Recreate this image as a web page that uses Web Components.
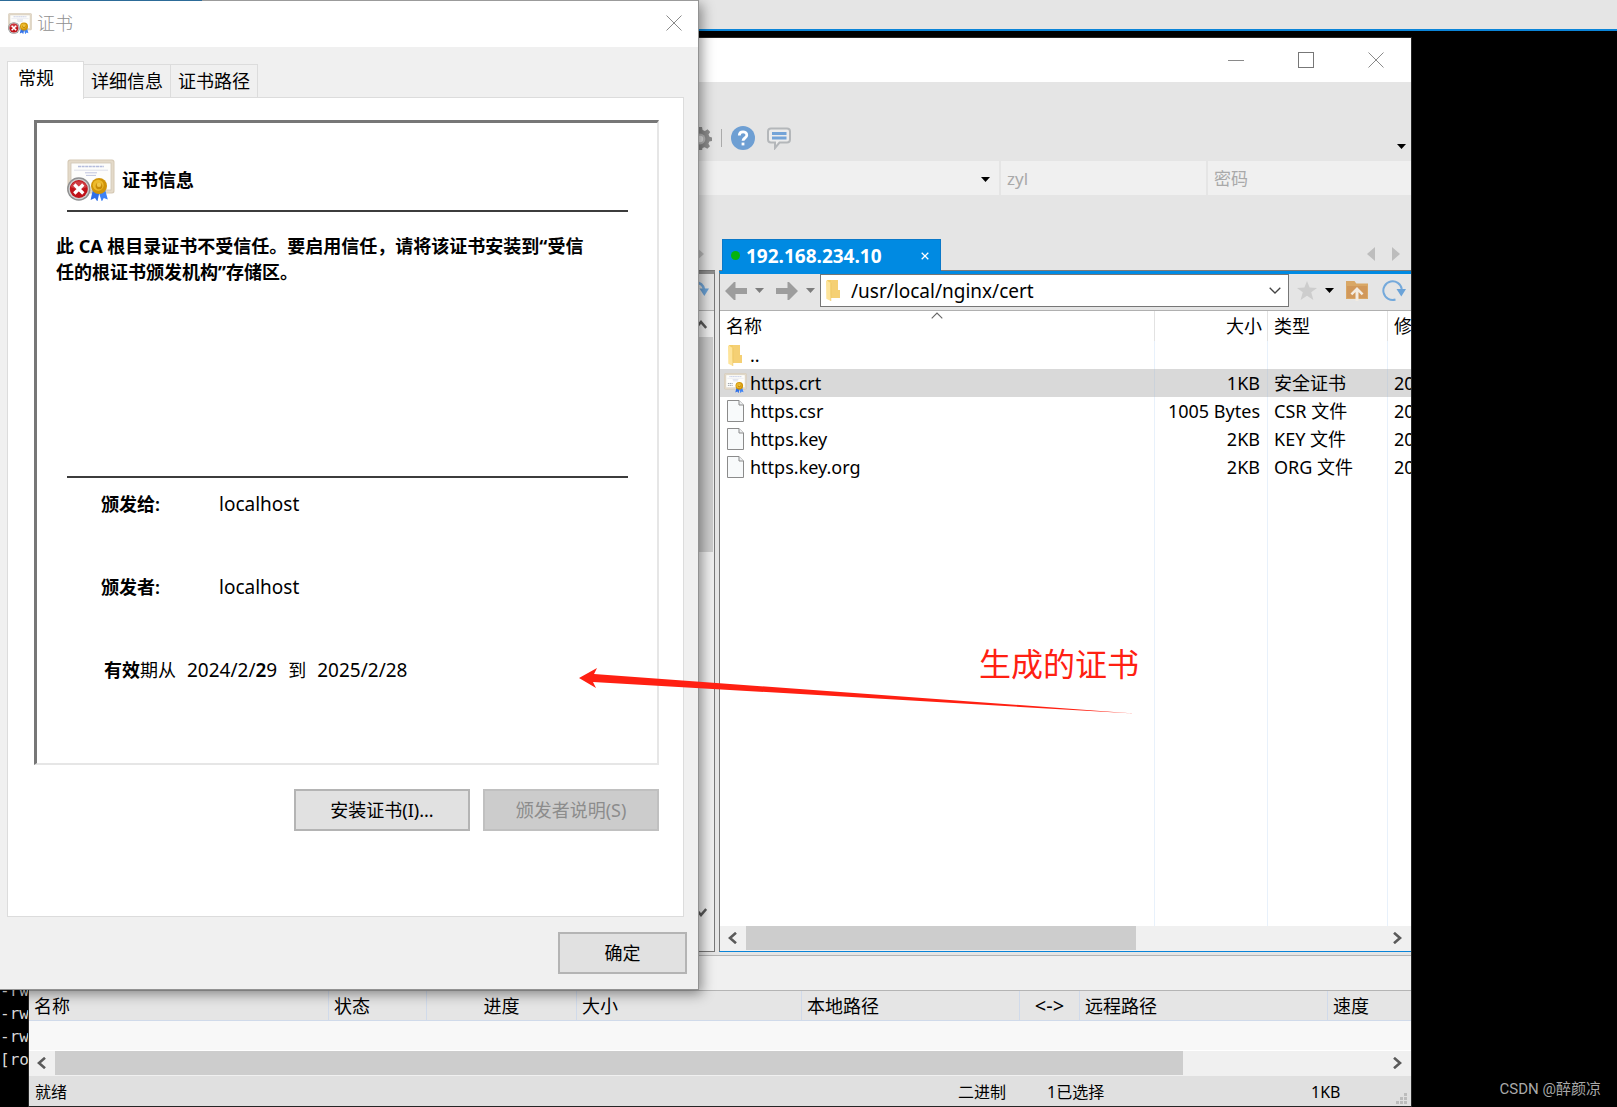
<!DOCTYPE html>
<html lang="zh-CN">
<head>
<meta charset="utf-8">
<title>证书</title>
<style>
  html, body { height: 100%; margin: 0; background: #000; overflow: hidden; }
  body { font-family: "Noto Sans", "Noto Sans CJK SC", sans-serif; font-size: 18px; line-height: 24px; color: #000; }
</style>
</head>
<body>
<desk-top>
  <sftp-window></sftp-window>
  <cert-dialog></cert-dialog>
  <red-note>生成的证书</red-note>
</desk-top>
<script>
const RESET = `
  *, *::before, *::after { box-sizing: border-box; }
  button, input { font: inherit; color: inherit; margin: 0; padding: 0; border: 0; background: none; border-radius: 0; outline: 0; }
  svg { display: block; }
`;
function define(name, css, html) {
  customElements.define(name, class extends HTMLElement {
    constructor() {
      super();
      const root = this.attachShadow({ mode: 'open' });
      root.innerHTML = `<style>${RESET}${css}</style>` + (typeof html === 'function' ? '' : html);
      this.renderer = typeof html === 'function' ? html : null;
    }
    connectedCallback() {
      if (this.renderer && !this.done) {
        this.done = true;
        this.shadowRoot.innerHTML += this.renderer(this);
      }
    }
  });
}

/* ---------- icons ---------- */
const rosette = (x, y, r) => `
  <path d="M${x - r * .75} ${y + r * .4}L${x - r * 1.05} ${y + r * 1.75}L${x - r * .5} ${y + r * 1.5}L${x - r * .2} ${y + r * 1.95}L${x + r * .1} ${y + r * .6}Z" fill="#2f6fe8"/>
  <path d="M${x + r * .75} ${y + r * .4}L${x + r * 1.1} ${y + r * 1.7}L${x + r * .6} ${y + r * 1.5}L${x + r * .35} ${y + r * 1.95}L${x - r * .1} ${y + r * .6}Z" fill="#3f83f5"/>
  <circle cx="${x}" cy="${y}" r="${r}" fill="#d09408"/>
  <circle cx="${x - r * .1}" cy="${y - r * .1}" r="${r * .68}" fill="#ecba2c"/>
  <circle cx="${x}" cy="${y}" r="${r * .42}" fill="#c68a08"/>
  <circle cx="${x}" cy="${y - r * .15}" r="${r * .28}" fill="#f0c648"/>`;
const paper = `
  <rect x=".5" y=".5" width="47" height="34" rx="2.500" fill="#d6cab6"/>
  <rect x="1.500" y="1.500" width="45" height="32" rx="2" fill="#e4dac9"/>
  <rect x="4" y="4" width="40" height="27" fill="#fdfdfb" stroke="#cfc6b6" stroke-width=".8"/>
  <path d="M11 7.500H37" stroke="#b4bcdc" stroke-width="1.400" stroke-dasharray="3 .6"/>
  <path d="M7 11.200H41" stroke="#dcdee8"/><path d="M18 13.800H30M19 16.400H29" stroke="#bfc4de"/>`;
const ICONS = {
  'cert-error': [48, 42, `${paper}${rosette(32, 27, 8)}
    <circle cx="11.8" cy="30" r="11.700" fill="#8f9091"/><circle cx="11.8" cy="30" r="10.300" fill="#d0d0d0"/>
    <circle cx="11.8" cy="30" r="9" fill="#bf1219"/><path d="M3.400 28a9 9 0 0 1 16.800 0q-8.400 4-16.800 0z" fill="#d03c42"/>
    <path d="M7.300 25.500l9 9M16.300 25.500l-9 9" stroke="#fff" stroke-width="3.200"/>`],
  'cert': [48, 42, `${paper}<path d="M8 22h10M8 26h10" stroke="#9aa0a8" stroke-width="2" stroke-dasharray="3 1"/>${rosette(32, 27, 8)}`],
  'folder': [15, 21, `<path d="M1 0h10q1 0 1 1v9.500h1.200q.8 0 .8 1V18H5z" fill="#f3cd67"/><path d="M5 0h7v10h2v8H5z" fill="#f5d074"/><path d="M0 .3L4.800 3V21L.3 18.700z" fill="#fee49a"/><path d="M4.800 3v18" stroke="#e9bd52" stroke-width=".6"/>`],
  'file': [17, 22, `<path d="M.5.500h11.500l4.500 4.500v16.500H.5z" fill="#f8fafb" stroke="#8b8b8b"/><path d="M12 .500v4.500h4.500" fill="#eef0f2" stroke="#8b8b8b"/>`],
  'back': [22, 18, `<path d="M0 9L9 0h1.500v6H22v6H10.500v6H9z" fill="#9d9d9d"/>`],
  'forward': [22, 18, `<path d="M22 9L13 0h-1.500v6H0v6h11.500v6H13z" fill="#9d9d9d"/>`],
  'down-grey': [9, 5, `<path d="M0 0h9L4.500 5z" fill="#7d7d7d"/>`],
  'down': [9, 5, `<path d="M0 0h9L4.500 5z" fill="#000"/>`],
  'tri-left': [8, 14, `<path d="M8 0v14L0 7z" fill="#bdbdbd"/>`],
  'tri-right': [8, 14, `<path d="M0 0v14l8-7z" fill="#bdbdbd"/>`],
  'star': [20, 19, `<path d="M10 0l2.600 6.600 7.400.4-5.800 4.300L16.400 19 10 14.800 3.600 19l2.200-7.700L0 7l7.400-.4z" fill="#cdcdcd"/>`],
  'folder-up': [22, 20, `<path d="M0 0h8.500l1.800 2.600H22V18H0z" fill="#d9a765"/><path d="M1 5h20v12H1z" fill="#d1985a"/><path d="M11 6l6.500 6.500-1.800 1.800-3.200-3.200V20h-3v-8.900l-3.200 3.200-1.800-1.800z" fill="#f3ece2"/>`],
  'refresh': [24, 21, `<path d="M19.800 9A9.300 9.300 0 1 0 13.500 19.500" fill="none" stroke="#74a9db" stroke-width="2"/><path d="M14.500 9H24l-4.700 7.500z" fill="#6ba3d8"/>`],
  'refresh-down': [24, 21, `<path d="M6 2.500Q18 1 19.200 10" fill="none" stroke="#74a9db" stroke-width="2.400"/><path d="M14.500 8.500H24l-4.700 7.500z" fill="#6ba3d8"/>`],
  'gear': [24, 24, `<path d="M10 1h4l.6 3 2.300 1 2.700-1.800 2.600 2.700-1.700 2.600 1 2.300 2.500.7v3.400l-2.700.6-.9 2.200 1.600 2.500-2.700 2.600-2.600-1.600-2.200.9-.6 2.900h-3.800l-.6-2.900-2.200-.9-2.600 1.600-2.600-2.600 1.500-2.500-.9-2.200L0 14.900v-3.400l2.900-.7.9-2.300-1.600-2.600 2.700-2.700L7.500 5l2-1z" fill="#8c8c8c"/><circle cx="12" cy="13" r="5.400" fill="#b9b9b9"/><circle cx="12" cy="13" r="3.200" fill="#e5e5e5"/>`],
  'help': [24, 24, `<circle cx="12" cy="12" r="12" fill="#6e9fd3"/><path d="M8.300 9.600C8.300 4.800 15.800 4.800 15.800 9.200C15.800 12 12 12 12 14.800" fill="none" stroke="#fff" stroke-width="2.800"/><rect x="10.600" y="16.600" width="2.800" height="2.800" fill="#fff"/>`],
  'chat': [24, 24, `<path d="M4 2.500h16q3 0 3 3v8q0 3-3 3h-7.500L8 22v-5.500H4q-3 0-3-3v-8q0-3 3-3z" fill="#ececec" stroke="#b4b7ba" stroke-width="2"/><path d="M5 7.500h14.500M5 12h14.500" stroke="#74a4d8" stroke-width="3"/>`],
  'min': [16, 16, `<path d="M0 8.500h16" stroke="#8a8a8a"/>`],
  'max': [16, 16, `<rect x=".5" y=".5" width="15" height="15" fill="none" stroke="#777"/>`],
  'close': [16, 16, `<path d="M.5.500l15 15M15.500.500l-15 15" stroke="#8a8a8a"/>`],
  'close-tab': [8, 8, `<path d="M.7.700l6.600 6.600M7.300.700L.7 7.300" stroke="#fff" stroke-width="1.300"/>`],
  'chev-down': [12, 7, `<path d="M.7.700L6 6 11.300.700" fill="none" stroke="#444" stroke-width="1.300"/>`],
  'chev-up': [12, 7, `<path d="M.7 6.300L6 1l5.300 5.300" fill="none" stroke="#666" stroke-width="1.100"/>`],
  'sb-left': [10, 12, `<path d="M8 .8L2 6l6 5.200" fill="none" stroke="#5a5a5a" stroke-width="2.600"/>`],
  'sb-right': [10, 12, `<path d="M1 .8L7 6l-6 5.200" fill="none" stroke="#5a5a5a" stroke-width="2.600"/>`],
  'sb-up': [12, 10, `<path d="M.8 9L6 3l5.200 6" fill="none" stroke="#5a5a5a" stroke-width="2.600"/>`],
  'sb-down': [12, 10, `<path d="M.8 1L6 7l5.200-6" fill="none" stroke="#5a5a5a" stroke-width="2.600"/>`],
  'grip': [12, 12, `<path d="M9 0h3v3H9zM5 4h3v3H5zM9 4h3v3H9zM1 8h3v3H1zM5 8h3v3H5zM9 8h3v3H9z" fill="#bcbcbc"/>`]
};
define('ui-icon', `:host { display: inline-block; flex: none; vertical-align: middle; }`, el => {
  const [w, h, body] = ICONS[el.getAttribute('name')];
  const size = el.getAttribute('size');
  const width = size ? +size : w;
  return `<svg width="${width}" height="${Math.round(h * width / w)}" viewBox="0 0 ${w} ${h}" aria-hidden="true">${body}</svg>`;
});

/* ---------- scroll bar ---------- */
define('scroll-bar', `
  :host { display: flex; background: #f0f0f0; flex: none; height: 25px; padding-bottom: 1px; }
  :host([vertical]) { flex-direction: column; width: 25px; height: auto; padding: 0 1px 0 0; }
  button { flex: none; width: 26px; height: 24px; display: grid; place-items: center; }
  :host([vertical]) button { width: 24px; height: 26px; }
  .track { flex: 1; display: flex; min-width: 0; }
  :host([vertical]) .track { flex-direction: column; }
  .thumb { background: #cdcdcd; flex: none; flex-basis: var(--thumb); }
`, el => {
  const v = el.hasAttribute('vertical');
  return `<button aria-label="向前滚动"><ui-icon name="${v ? 'sb-up' : 'sb-left'}"></ui-icon></button>
    <div class="track"><div class="thumb"></div></div>
    <button aria-label="向后滚动"><ui-icon name="${v ? 'sb-down' : 'sb-right'}"></ui-icon></button>`;
});

/* ---------- desktop ---------- */
define('desk-top', `
  :host { display: block; position: relative; height: 100vh; overflow: hidden; background: #000; }
  .strip { height: 31px; background: #e5e5e5; border-bottom: 2px solid #0a84d8; }
  .term { position: absolute; left: 0; bottom: 36px; margin: 0; font: 16px/23px "DejaVu Sans Mono", monospace; color: #d8d8d8; }
  .mark { position: absolute; right: 16px; bottom: 6px; font: 15px/24px Roboto, "Noto Sans CJK SC", sans-serif; color: #a9a9a9; }
`, `<div class="strip"></div>
<pre class="term">-rw
-rw
-rw
[ro</pre>
<span class="mark">CSDN @醉颜凉</span>
<slot></slot>`);

/* ---------- remote file list ---------- */
define('file-list', `
  :host { display: flex; flex: 1; min-height: 0; background: #fff; }
  table { border-collapse: separate; border-spacing: 0; table-layout: fixed; width: 100%; height: 100%; }
  th, td { padding: 0 6px; height: 28px; font-weight: 400; text-align: left; white-space: nowrap; overflow: hidden; border-right: 1px solid #e8f1fb; }
  th { height: 30px; border-color: #e2e2e2; }
  tr > :last-child { border-right: 0; padding-right: 0; }
  .name { padding-left: 4px; }
  td.num { text-align: right; padding-right: 7px; }
  th.num { text-align: right; padding-right: 5px; }
  .c2 { width: 113px; } .c3 { width: 120px; } .c4 { width: 23px; }
  .sel td { background: #d9d9d9; border-right-color: #cbd2da; }
  .cell { display: flex; align-items: center; }
  .pic { width: 26px; display: flex; justify-content: center; padding-right: 3px; }
  .cell span { line-height: 28px; }
  .head { display: grid; grid-template-columns: 1fr auto 1fr; height: 30px; align-items: center; }
  .head ui-icon { align-self: start; padding-top: 1px; }
  .fill td { height: auto; }
`, () => {
  const rows = [
    ['folder', '..', '', '', ''],
    ['cert', 'https.crt', '1KB', '安全证书', '20'],
    ['file', 'https.csr', '1005 Bytes', 'CSR 文件', '20'],
    ['file', 'https.key', '2KB', 'KEY 文件', '20'],
    ['file', 'https.key.org', '2KB', 'ORG 文件', '20']
  ];
  return `<table aria-label="远程文件">
    <colgroup><col><col class="c2"><col class="c3"><col class="c4"></colgroup>
    <thead><tr><th><div class="head"><span>名称</span><ui-icon name="chev-up"></ui-icon></div></th><th class="num">大小</th><th>类型</th><th>修</th></tr></thead>
    <tbody>${rows.map((r, i) => `<tr${i === 1 ? ' class="sel"' : ''}><td class="name"><div class="cell"><span class="pic"><ui-icon name="${r[0]}"${r[0] === 'cert' ? ' size="23"' : ''}></ui-icon></span><span>${r[1]}</span></div></td><td class="num">${r[2]}</td><td>${r[3]}</td><td>${r[4]}</td></tr>`).join('')}
    <tr class="fill" aria-hidden="true"><td></td><td></td><td></td><td></td></tr></tbody></table>`;
});

/* ---------- transfer queue ---------- */
define('transfer-list', `
  :host { display: block; background: #f8f8f8; height: 60px; border-bottom: 1px solid #fff; }
  table { border-collapse: separate; border-spacing: 0; table-layout: fixed; width: 100%; }
  th { height: 30px; padding: 0 5px; background: #e5e5e5; font-weight: 400; text-align: left; border-right: 1px solid #d0daea; border-bottom: 1px solid #d0daea; white-space: nowrap; overflow: hidden; }
  th:last-child { border-right: 0; }
  .mid { text-align: center; }
  .dir { font-size: 20px; }
`, `<table aria-label="传输队列"><colgroup><col style="width:300px"><col style="width:98px"><col style="width:150px"><col style="width:225px"><col style="width:218px"><col style="width:60px"><col><col style="width:83px"></colgroup>
  <thead><tr><th>名称</th><th>状态</th><th class="mid">进度</th><th>大小</th><th>本地路径</th><th class="mid dir">&lt;-&gt;</th><th>远程路径</th><th>速度</th></tr></thead></table>`);

/* ---------- SFTP window ---------- */
define('sftp-window', `
  :host { position: absolute; left: 28px; right: 205px; top: 37px; bottom: 0; display: flex; flex-direction: column; background: #e5e5e5; border: 1px solid #262626; }
  header { height: 44px; flex: none; background: #fff; display: flex; justify-content: flex-end; }
  header button { width: 70px; display: grid; place-items: center; }
  .tools { height: 79px; flex: none; display: flex; justify-content: space-between; padding: 32px 5px 0 659px; align-items: center; }
  .tools div { display: flex; align-items: center; gap: 12px; }
  .tools i { width: 1px; height: 18px; background: #aaa; margin: 0 -3px; }
  .tools > button { padding-top: 14px; display: block; }
  .conn { height: 34px; flex: none; display: flex; gap: 2px; color: #a9a9a9; }
  .conn > * { background: #f0f0f0; min-width: 0; }
  .conn input { padding: 2px 6px 0; font-size: 17px; }
  .conn input::placeholder { color: #a9a9a9; opacity: 1; }
  .host { flex: 1; display: flex; }
  .host input { flex: 1; min-width: 0; }
  .host button { width: 28px; display: grid; place-items: center; padding-top: 2px; }
  .user { width: 205px; } .pass { width: 203px; }
  main { flex: 1; min-height: 0; display: flex; gap: 4px; }
  .left { flex: none; width: 686px; display: flex; flex-direction: column; }
  .right { flex: 1; min-width: 0; display: flex; flex-direction: column; }
  .tabs { height: 76px; flex: none; display: flex; align-items: flex-end; justify-content: space-between; border-bottom: 1px solid #7a7a7a; padding: 0 11px 0 3px; }
  .left .tabs { justify-content: flex-end; }
  .nav { display: flex; gap: 17px; padding-bottom: 9px; }
  .nav ui-icon { display: block; }
  .nav button { display: block; }
  .tab { display: flex; align-items: center; width: 219px; height: 32px; margin-bottom: -1px; background: #008ae2; color: #fff; border: 1px solid #0a78c8; border-bottom: 0; padding: 0 11px 0 8px; gap: 6px; }
  .tab b { flex: 1; text-align: left; font-size: 19px; font-weight: 700; }
  .dot { width: 9px; height: 9px; border-radius: 50%; background: #06b30f; }
  .box { flex: 1; min-height: 0; display: flex; flex-direction: column; border-left: 1px solid #777; border-top: 3px solid #008ae2; border-bottom: 1px solid #0a84d8; }
  .left .box { border: 1px solid #777; border-top: 3px solid #8c8c8c; }
  .bar { height: 37px; flex: none; display: flex; align-items: center; padding: 0 5px 3px; border-bottom: 1px solid #b0b0b0; gap: 8px; }
  .left .bar { justify-content: flex-end; }
  .bar button { flex: none; display: grid; }
  .addr { flex: 1; min-width: 0; display: flex; align-items: center; height: 33px; background: #fff; border: 1px solid #767676; padding: 0 7px 0 5px; gap: 10px; margin-left: -7px; }
  .addr input { flex: 1; min-width: 0; height: 31px; font-size: 19px; }
  .grp { display: flex; align-items: center; gap: 8px; margin-right: 4px; }
  .up { margin-right: 6px; }
  .body { flex: 1; min-height: 0; display: flex; justify-content: flex-end; background: #f0f0f0; padding-bottom: 25px; }
  .gap { flex: none; height: 3px; }
  .log { flex: none; height: 36px; background: #f0f0f0; border-top: 1px solid #b4b4b4; border-bottom: 1px solid #b4b4b4; }
  footer { flex: none; height: 30px; background: #e0e0e0; display: grid; grid-template-columns: 1fr 89px 264px 84px 12px; align-items: center; font-size: 16px; padding: 2px 4px 0 6px; }
  footer ui-icon { align-self: end; padding-bottom: 1px; }
`, `
<header><button aria-label="最小化"><ui-icon name="min"></ui-icon></button><button aria-label="最大化"><ui-icon name="max"></ui-icon></button><button aria-label="关闭"><ui-icon name="close"></ui-icon></button></header>
<div class="tools"><div><ui-icon name="gear"></ui-icon><i></i><ui-icon name="help"></ui-icon><ui-icon name="chat"></ui-icon></div><button aria-label="工具栏选项"><ui-icon name="down"></ui-icon></button></div>
<div class="conn"><div class="host"><input aria-label="主机"><button aria-label="选择主机"><ui-icon name="down"></ui-icon></button></div><input class="user" aria-label="用户名" placeholder="zyl"><input class="pass" aria-label="密码" placeholder="密码"></div>
<main>
  <section class="left">
    <div class="tabs"><div class="nav"><button aria-label="右移"><ui-icon name="tri-right"></ui-icon></button></div></div>
    <div class="box"><div class="bar"><button aria-label="刷新"><ui-icon name="refresh-down"></ui-icon></button></div>
      <div class="body"><scroll-bar vertical style="--thumb:215px"></scroll-bar></div></div>
  </section>
  <section class="right">
    <div class="tabs"><button class="tab"><span class="dot"></span><b>192.168.234.10</b><ui-icon name="close-tab"></ui-icon></button>
      <div class="nav"><button aria-label="左移"><ui-icon name="tri-left"></ui-icon></button><button aria-label="右移"><ui-icon name="tri-right"></ui-icon></button></div></div>
    <div class="box">
      <div class="bar"><div class="grp"><button aria-label="后退"><ui-icon name="back"></ui-icon></button><ui-icon name="down-grey"></ui-icon></div>
        <div class="grp"><button aria-label="前进"><ui-icon name="forward"></ui-icon></button><ui-icon name="down-grey"></ui-icon></div>
        <div class="addr"><ui-icon name="folder"></ui-icon><input aria-label="路径" value="/usr/local/nginx/cert"><button aria-label="展开"><ui-icon name="chev-down"></ui-icon></button></div>
        <div class="grp"><button aria-label="收藏"><ui-icon name="star"></ui-icon></button><ui-icon name="down"></ui-icon></div>
        <div class="grp up"><button aria-label="上级目录"><ui-icon name="folder-up"></ui-icon></button></div>
        <button aria-label="刷新"><ui-icon name="refresh"></ui-icon></button></div>
      <file-list></file-list>
      <scroll-bar style="--thumb:390px"></scroll-bar>
    </div>
  </section>
</main>
<div class="gap"></div>
<div class="log"></div>
<transfer-list></transfer-list>
<scroll-bar style="--thumb:1128px"></scroll-bar>
<footer><span>就绪</span><span>二进制</span><span>1已选择</span><span>1KB</span><ui-icon name="grip"></ui-icon></footer>
`);

/* ---------- dialog parts ---------- */
define('win-button', `
  :host { display: block; }
  button { width: 100%; height: 42px; background: #e1e1e1; border: 2px solid #b4b4b4; }
  button:disabled { background: #ccc; border-color: #c0c0c0; color: #8c8c8c; }
`, el => `<button${el.hasAttribute('disabled') ? ' disabled' : ''}><slot></slot></button>`);

define('cert-field', `
  :host { display: grid; grid-template-columns: 118px 1fr; height: 83px; }
  b { font-weight: 600; }
  span { font-size: 19px; }
`, el => `<b>${el.getAttribute('label')}</b><span><slot></slot></span>`);

define('cert-dialog', `
  :host { position: absolute; left: 0; top: 0; width: 699px; box-sizing: border-box; display: flex; flex-direction: column; background: #f0f0f0; border-right: 1px solid #929292; border-bottom: 1px solid #929292; box-shadow: 3px 4px 12px rgba(0,0,0,.42); }
  .edge { height: 1px; background: linear-gradient(90deg, #2c6b98 202px, #9b9b9b 202px); }
  header { height: 46px; background: #fff; display: flex; align-items: center; gap: 5px; padding: 0 16px 2px 8px; color: #909090; }
  header span { flex: 1; font-weight: 300; }
  header button { display: grid; }
  .content { padding: 14px 14px 15px 7px; display: flex; flex-direction: column; }
  .tabs { display: flex; align-items: flex-end; height: 36px; }
  .tabs button { width: 87px; height: 33px; border: 1px solid #dcdcdc; border-left: 0; border-bottom: 0; white-space: nowrap; }
  .tabs .on { width: 77px; height: 38px; margin-bottom: -2px; border-left: 1px solid #dcdcdc; background: #fff; text-align: left; padding: 0 0 6px 10px; z-index: 1; }
  .panel { background: #fff; border: 1px solid #dcdcdc; padding: 22px 24px 85px 26px; }
  .frame { border: 3px solid #777; border-right: 2px solid #e6e6e6; border-bottom: 2px solid #e6e6e6; height: 645px; padding: 36px 29px 0 30px; }
  .head { display: flex; align-items: center; gap: 7px; height: 42px; font-weight: 600; }
  hr { border: 0; height: 2px; background: #3c3c3c; margin: 9px 0 0; }
  p { font-weight: 700; line-height: 26px; height: 243px; margin: 21px 0 0 -11px; white-space: nowrap; }
  hr.low { margin-top: 0; }
  .fields { padding: 14px 0 0 34px; }
  .valid { padding-left: 3px; display: flex; gap: 11px; }
  .valid b { font-weight: 600; }
  .date { font-size: 19px; }
  .btns { display: flex; justify-content: flex-end; gap: 13px; padding-top: 24px; }
  .btns win-button { width: 176px; }
  .ok { align-self: flex-end; width: 129px; margin: 15px -3px 0 0; }
`, `
<div class="edge"></div>
<header><ui-icon name="cert-error" size="24"></ui-icon><span>证书</span><button aria-label="关闭"><ui-icon name="close"></ui-icon></button></header>
<div class="content">
  <div class="tabs" role="tablist"><button class="on" role="tab" aria-selected="true">常规</button><button role="tab">详细信息</button><button role="tab">证书路径</button></div>
  <div class="panel">
    <div class="frame">
      <div class="head"><ui-icon name="cert-error"></ui-icon><span>证书信息</span></div>
      <hr>
      <p>此 CA 根目录证书不受信任。要启用信任，请将该证书安装到“受信<br>任的根证书颁发机构”存储区。</p>
      <hr class="low">
      <div class="fields">
        <cert-field label="颁发给:">localhost</cert-field>
        <cert-field label="颁发者:">localhost</cert-field>
        <div class="valid"><span><b>有效</b>期从</span><span class="date">2024/2/<b>2</b>9</span><span>到</span><span class="date">2025/2/28</span></div>
      </div>
    </div>
    <div class="btns"><win-button>安装证书(I)...</win-button><win-button disabled>颁发者说明(S)</win-button></div>
  </div>
  <win-button class="ok">确定</win-button>
</div>`);

/* ---------- annotation drawn over the windows ---------- */
define('red-note', `
  :host { position: absolute; left: 579px; top: 644px; width: 560px; color: #ff2012; font-size: 32px; line-height: 40px; text-align: right; pointer-events: none; }
  svg { margin-top: -16px; }
`, `<slot></slot><svg width="560" height="50" viewBox="0 0 560 50" aria-hidden="true"><path d="M0 10L18 0l-3 6L555 45.500 14 14l3 6z" fill="#ff2012"/></svg>`);
</script>
</body>
</html>
